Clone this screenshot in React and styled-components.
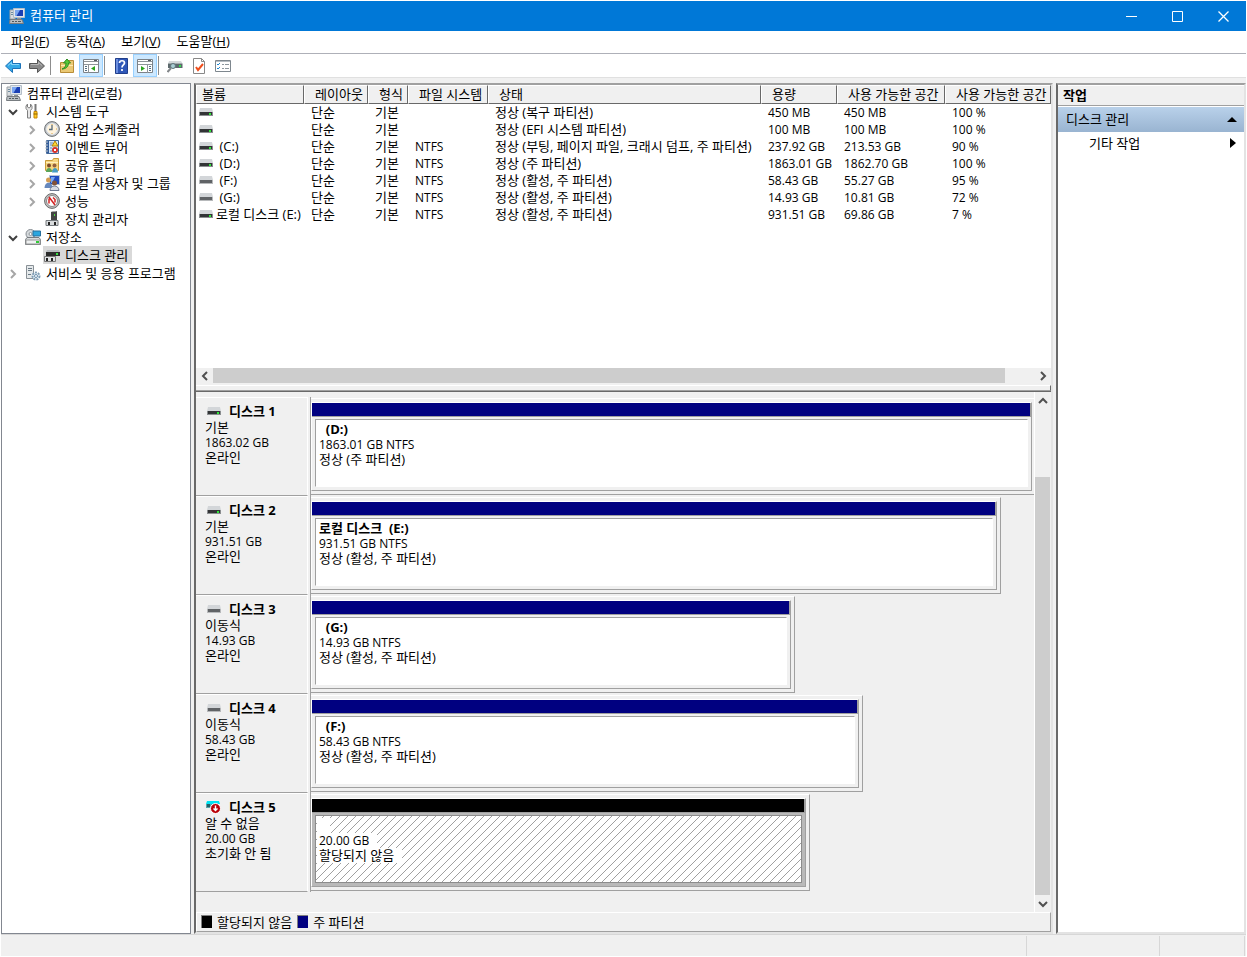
import styled, { createGlobalStyle } from "styled-components";

const GlobalStyle = createGlobalStyle`
  * {
    box-sizing: border-box;
  }
  body {
    margin: 0;
    background-color: white;
  }
  body,
  button {
    font-family: "Open Sans", "Noto Sans CJK KR", sans-serif;
    font-size: 13px;
    line-height: 18px;
    color: black;
  }
  button {
    border: 0;
    padding: 0;
    background: none;
  }
`;

const Window = styled.div`
  display: flex;
  flex-direction: column;
  min-height: 100vh;
  padding: 1px;
  background-color: white;
`;

const TitleBar = styled.header`
  display: flex;
  align-items: center;
  height: 30px;
  padding-left: 8px;
  background-color: #0078d7;
  color: white;
`;

const TitleText = styled.h1`
  flex: 1;
  margin: 0;
  padding: 0 0 2px 5px;
  font-size: 13px;
  line-height: 18px;
  font-weight: 400;
`;

const WindowButton = styled.button`
  display: flex;
  align-items: center;
  justify-content: center;
  width: 46px;
  height: 30px;
`;

const MenuBar = styled.nav`
  display: flex;
  align-items: center;
  height: 23px;
  border-bottom: 1px solid #aeb0b8;
`;

const MenuItem = styled.button`
  padding: 0 6px 2px 10px;
`;

const Toolbar = styled.div`
  display: flex;
  height: 23px;
`;

const ToolButton = styled.button`
  display: flex;
  align-items: center;
  justify-content: center;
  width: 24px;
  height: 23px;
  border: 1px solid ${(props) => (props.$active ? "#99d1ff" : "transparent")};
  background-color: ${(props) => (props.$active ? "#cce8ff" : "transparent")};
`;

const ToolDash = styled.div`
  width: 1px;
  height: 19px;
  margin: 2px 4px 0 1px;
  background-color: #8d8d8d;
`;

const Body = styled.main`
  display: flex;
  flex: 1;
  gap: 3px;
  padding-top: 5px;
  border-top: 1px solid #e0e0e0;
  background-color: #f0f0f0;
`;

const TreePanel = styled.aside`
  width: 190px;
  border: 1px solid #828790;
  background-color: white;
`;

const TreeList = styled.ul`
  margin: 0;
  padding: 0;
  list-style: none;
`;

const TreeRow = styled.li`
  display: flex;
  align-items: center;
  height: 18px;
  padding-left: ${(props) => [3, 3, 22][props.$level]}px;
`;

const TreeToggle = styled.span`
  display: flex;
  justify-content: center;
  width: 16px;
  margin-right: 3px;
  padding-top: 2px;
`;

const TreeItem = styled.button`
  display: flex;
  align-items: center;
  gap: 5px;
  height: 18px;
  padding: 0 4px 0 1px;
  white-space: nowrap;
  background-color: ${(props) => (props.$selected ? "#d9d9d9" : "transparent")};
`;

const SunkenPanel = styled.section`
  display: flex;
  flex-direction: column;
  border: 2px solid;
  border-color: #a0a0a0 #e3e3e3 #e3e3e3 #696969;
`;

const CenterPanel = styled(SunkenPanel)`
  flex: 1;
  min-width: 0;
`;

const VolumePane = styled.div`
  display: flex;
  flex-direction: column;
  height: 307px;
  border-bottom: 1px solid #696969;
`;

const VolumeList = styled.div`
  flex: 1;
  overflow: hidden;
  background-color: white;
`;

const VolumeTable = styled.table`
  width: 100%;
  table-layout: fixed;
  border-collapse: separate;
  border-spacing: 0;
`;

const HeadCell = styled.th`
  width: ${(props) => (props.$width ? `${props.$width}px` : "auto")};
  height: 19px;
  padding: 0 0 1px ${(props) => (props.$first ? 5 : 10)}px;
  border: 1px solid;
  border-color: white #696969 #696969 white;
  background-color: #f0f0f0;
  font-weight: 400;
  line-height: 16px;
  text-align: left;
  white-space: nowrap;
  overflow: hidden;
`;

const Cell = styled.td`
  height: 17px;
  padding: 0 0 0 ${(props) => (props.$first ? 3 : 7)}px;
  font-size: ${(props) => (props.$latin ? 12 : 13)}px;
  line-height: 17px;
  white-space: pre;
`;

const VolumeName = styled.div`
  display: flex;
  align-items: center;
  gap: 3px;
`;

const HorizontalBar = styled.div`
  display: flex;
  height: 16px;
`;

const HorizontalTrack = styled.div`
  flex: 1;
`;

const HorizontalThumb = styled.div`
  width: 96.5%;
  height: 15px;
  background-color: #cdcdcd;
`;

const ScrollButton = styled.button`
  display: flex;
  align-items: center;
  justify-content: center;
  width: ${(props) => (props.$vertical ? 15 : 17)}px;
  height: ${(props) => (props.$vertical ? 17 : 15)}px;
`;

const Splitter = styled.div`
  height: 6px;
  margin-top: 1px;
  border-top: 1px solid white;
  border-right: 1px solid #696969;
  border-bottom: 1px solid #a0a0a0;
`;

const DiskPane = styled.div`
  display: flex;
  flex: 1;
`;

const DiskList = styled.div`
  flex: 1;
  min-width: 0;
  padding-top: 5px;
  border-right: 1px solid white;
`;

const DiskRow = styled.div`
  display: flex;
  height: 99px;
`;

const DiskInfo = styled.div`
  width: 112px;
  padding: 5px 0 0 9px;
  border: 1px solid;
  border-color: white white #a0a0a0 #f0f0f0;
  border-left: 0;
  line-height: 15px;
`;

const DiskTitle = styled.h2`
  display: flex;
  align-items: center;
  gap: 8px;
  margin: 0 0 1px;
  font-size: 13px;
  line-height: 16px;
  font-weight: 700;
`;

const IconSlot = styled.span`
  display: flex;
  justify-content: flex-end;
  width: 16px;
`;

const Line = styled.div`
  height: 15px;
  font-size: ${(props) => (props.$latin ? 12 : 13)}px;
  font-weight: ${(props) => (props.$bold ? 700 : 400)};
  line-height: 15px;
  white-space: pre;
`;

const PartitionArea = styled.div`
  flex: 1;
  min-width: 0;
  margin-left: 2px;
  padding: 1px 0;
  border-left: 1px solid #a0a0a0;
`;

const PartitionFrame = styled.div`
  width: ${(props) => props.$share}%;
  height: 97px;
  padding: 3px ${(props) => (props.$share === 100 ? 2 : 3)}px 3px 0;
  border: 1px solid;
  border-color: white #a0a0a0 #a0a0a0;
  border-left: 0;
  border-right-width: ${(props) => (props.$share === 100 ? 0 : 1)}px;
`;

const Partition = styled.div`
  display: flex;
  flex-direction: column;
  height: 89px;
  border: 1px solid;
  border-color: white #a0a0a0 #a0a0a0 white;
  background-color: ${(props) => (props.$free ? "#b9b9b9" : "#f0f0f0")};
`;

const PartitionBar = styled.div`
  height: 14px;
  border-right: 1px solid #a0a0a0;
  border-bottom: 1px solid #a0a0a0;
  background-color: ${(props) => (props.$free ? "black" : "#000080")};
`;

const PartitionBox = styled.div`
  flex: 1;
  margin: 2px 3px 3px;
  padding: 2px 0 0 3px;
  border: 1px solid;
  border-color: #a0a0a0 white white #a0a0a0;
  background-color: white;
`;

const FreeBox = styled(PartitionBox)`
  padding: 2px 0 0 1px;
  border-color: #8c8c8c;
  background-image: linear-gradient(
    to bottom right,
    transparent 45%,
    #a0a0a0 45%,
    #a0a0a0 55%,
    transparent 55%
  );
  background-size: 8px 8px;
`;

const FreeLine = styled(Line)`
  width: fit-content;
  padding: 0 8px 0 2px;
  background-color: white;
`;

const VerticalBar = styled.div`
  display: flex;
  flex-direction: column;
  width: 16px;
`;

const VerticalTrack = styled.div`
  display: flex;
  flex: 1;
  align-items: flex-end;
`;

const VerticalThumb = styled.div`
  width: 15px;
  height: 86%;
  background-color: #cdcdcd;
`;

const Legend = styled.div`
  display: flex;
  align-items: center;
  gap: 5px;
  height: 20px;
  padding: 0 0 1px 4px;
  border: 1px solid;
  border-color: white #a0a0a0 #a0a0a0 white;
`;

const LegendColor = styled.span`
  width: 11px;
  height: 13px;
  border: 1px solid #808080;
  border-right: 0;
  border-bottom: 0;
  background-color: ${(props) => props.$color};
`;

const ActionPanel = styled(SunkenPanel)`
  width: 190px;
  background-color: white;
`;

const ActionHead = styled.h2`
  height: 21px;
  margin: 0 0 1px;
  padding: 1px 0 0 5px;
  border-top: 1px solid white;
  border-bottom: 1px solid #a0a0a0;
  background-color: #f0f0f0;
  font-size: 13px;
  line-height: 16px;
  font-weight: 700;
`;

const ActionGroup = styled.button`
  display: flex;
  align-items: center;
  justify-content: space-between;
  height: 25px;
  padding: 0 7px 1px 8px;
  background-image: linear-gradient(#b9d1ea, #99b4d1);
`;

const ActionItem = styled.button`
  display: flex;
  align-items: center;
  justify-content: space-between;
  height: 22px;
  padding: 0 8px 0 31px;
`;

const StatusBar = styled.footer`
  display: flex;
  justify-content: flex-end;
  height: 22px;
  padding-top: 1px;
  border-top: 1px solid #d7d7d7;
  background-color: #f0f0f0;
`;

const StatusPart = styled.div`
  width: ${(props) => props.$width}px;
  border-left: 1px solid #d7d7d7;
`;

const Svg = ({ children, w = 16, h = 16 }) => (
  <svg width={w} height={h} viewBox={`0 0 ${w} ${h}`} fill="none" aria-hidden="true">
    {children}
  </svg>
);

const ComputerIcon = () => (
  <Svg>
    <path d="M1 2h5v9H1z" fill="#d9dcdf" stroke="#9aa0a5" />
    <path d="M2 4.500h3M2 6.500h3" stroke="#6d8b9e" />
    <path d="M4.500 .5h11v9h-11z" fill="#dfe6ec" stroke="#b4bec8" />
    <path d="M6 2h8v6H6z" fill="#1a3fb4" />
    <path d="M6 2h5L7.500 8H6z" fill="#7ba6f0" />
    <path d="M8 10h4v1H8z" fill="#8b9299" />
    <path d="M1 11.500h12l1.500 4H.5z" fill="#b9bec2" stroke="#777c80" />
    <path d="M3 13.500h2m1 0h2m1 0h3" stroke="#4f5a61" />
  </Svg>
);

const ToolsIcon = () => (
  <Svg>
    <path d="M2.500 1v3l1.500 1 1.500-1V1l1.500 2v2.500L5.500 7.500V15h-3V7.500L1 5.500V3z" fill="#e8e8e8" stroke="#7e7e7e" />
    <path d="M10.500 1v7" stroke="#777" strokeWidth="2" />
    <path d="M9 8.500h3v6.500H9z" fill="#ffc91d" stroke="#c48609" />
    <path d="M8.500 11h4" stroke="#8d6300" />
  </Svg>
);

const ClockIcon = () => (
  <Svg>
    <circle cx="8" cy="8" r="7.400" fill="#c4c7ca" stroke="#6d7174" />
    <circle cx="8" cy="8" r="5.300" fill="#fff3dc" stroke="#e9edf0" />
    <path d="M8 4v4.500H5" stroke="#576a7a" strokeWidth="1.300" />
    <path d="M8 3v1m5 4h-1m-4 5v-1" stroke="#dda23e" />
  </Svg>
);

const EventIcon = () => (
  <Svg>
    <path d="M2.500 1.500h12v13h-12z" fill="#d5e6f8" stroke="#466b9b" />
    <path d="M3 2h2v12H3z" fill="#315b9a" />
    <path d="M1 3h3M1 6h3M1 9h3M1 12h3" stroke="#bfc6cc" />
    <path d="M6 4h3m-3 2h2m-2 3h2m-2 3h2" stroke="#6888b1" />
    <path d="M11 2l3 5H8z" fill="#ffd633" stroke="#b28408" />
    <circle cx="11" cy="11" r="3" fill="#d9322a" />
    <path d="M10 10l2 2m0-2l-2 2" stroke="white" />
  </Svg>
);

const SharedFolderIcon = () => (
  <Svg>
    <path d="M1.500 3.500h7l1-2h5v12h-13z" fill="#f7d681" stroke="#c89b3a" />
    <path d="M2 5.500h12" stroke="#fff0bd" />
    <circle cx="5" cy="8.500" r="2" fill="#7b4b2d" />
    <path d="M2 15c0-5.500 6-5.500 6 0z" fill="#5aa55a" />
    <circle cx="10.500" cy="8.500" r="2" fill="#95603d" />
    <path d="M8 15.500c0-6 6-6 6 0z" fill="#469cc4" />
  </Svg>
);

const UsersIcon = () => (
  <Svg>
    <path d="M5.500 .5h10v9h-10z" fill="#1f4cc0" stroke="#b8c5d3" />
    <path d="M7 2h4L8 8H7z" fill="#75a7f4" />
    <circle cx="4.500" cy="5" r="2.500" fill="#d49b52" />
    <path d="M.5 13c0-7 8-7 8 0z" fill="#6688bd" />
    <circle cx="10.500" cy="8" r="2.500" fill="#835236" />
    <path d="M6 15.500c0-6 9-6 9 0z" fill="#d6dae3" stroke="#6e7890" />
  </Svg>
);

const PerformanceIcon = () => (
  <Svg>
    <circle cx="8" cy="8" r="7.400" fill="#c3c3c3" stroke="#696969" />
    <circle cx="8" cy="8" r="5.500" fill="white" stroke="#888" />
    <path d="M5 10.500V5.500m0-1.500l6 8M9 4.500l2 2v3" stroke="#d32222" strokeWidth="1.500" />
  </Svg>
);

const DeviceIcon = () => (
  <Svg>
    <path d="M7 1l6-1v9H7z" fill="#444" />
    <path d="M7 1l2-1h4l-2 1z" fill="#a7a7a7" />
    <path d="M10 3h1v2h-1z" fill="#4cdc3c" />
    <path d="M2 9.500h12v5H2z" fill="#d9dcde" stroke="#74797d" />
    <path d="M4 11h2v3H4zm6 0h2v3h-2z" fill="#222" />
  </Svg>
);

const StorageIcon = () => (
  <Svg>
    <circle cx="5.500" cy="5" r="4.500" fill="#d5d9dc" stroke="#868c92" />
    <circle cx="5.500" cy="5" r="1.500" fill="white" stroke="#8d9499" />
    <path d="M8 2h7.500v5H8z" fill="#2ba6df" stroke="#286f9c" />
    <path d="M2 8.500h12l1.500 2v5H.5v-5z" fill="#d8dbdd" stroke="#777c80" />
    <path d="M1 11h14v4H1z" fill="#eff1f2" stroke="#999" />
    <path d="M11 12h3v2h-3z" fill="#31cc36" />
  </Svg>
);

const DiskManagementIcon = () => (
  <Svg>
    <path d="M3 3h12l1 2v1H2V5z" fill="#b8bcbf" />
    <path d="M2 5h14v4H2z" fill="#2c2c2c" />
    <path d="M12 6h2v2h-2z" fill="#36df43" />
    <path d="M.5 9.500h11v5H.5z" fill="#e0e2e4" stroke="#777" />
    <path d="M2 11h2v3H2zm5 0h2v3H7z" fill="#222" />
  </Svg>
);

const ServicesIcon = () => (
  <Svg>
    <path d="M1.500 .5h7v13h-7z" fill="#e5e9eb" stroke="#899096" />
    <path d="M3 3.500h4M3 5.500h4M3 9.500h3" stroke="#697984" />
    <circle cx="11" cy="11" r="3.500" fill="#e9f2f8" stroke="#7f9db4" strokeWidth="2" strokeDasharray="2 1" />
    <circle cx="11" cy="11" r="1.500" fill="white" stroke="#6e91ae" />
  </Svg>
);

const DriveIcon = ({ removable }) => (
  <Svg w={14} h={9}>
    <path d="M1 0h12l1 4H0z" fill="#d3d6d9" />
    <path d="M0 4h14v4H0z" fill={removable ? "#b7b9bb" : "#8b8e90"} />
    <path d="M1 4h12v3H1z" fill={removable ? "#606366" : "#323436"} />
    {!removable && <path d="M10 5h2v2h-2z" fill="#2ee738" />}
  </Svg>
);

const UnknownDriveIcon = () => (
  <Svg w={15} h={13}>
    <path d="M1 0h12l1 3H0z" fill="#00e4f3" />
    <path d="M0 3h7v4H0z" fill="#59a3aa" />
    <path d="M1 3h3v3H1z" fill="#285e65" />
    <circle cx="9.500" cy="7.500" r="5" fill="#b90008" stroke="white" />
    <path d="M9.500 4.500v5m-2-2l2 2 2-2" stroke="white" strokeWidth="1.400" />
  </Svg>
);

const ArrowIcon = ({ back }) => (
  <Svg>
    <path
      d={back ? "M.5 8l7-6.500v4h8v5h-8v4z" : "M15.500 8l-7-6.500v4h-8v5h8v4z"}
      fill={back ? "#35a9e6" : "#8a8a8a"}
      stroke={back ? "#1c72b8" : "#555"}
    />
    <path d={back ? "M3 7.500l3.500-3v2H14" : "M2 6.500h7.500v-2l3.500 3"} stroke={back ? "#8bd7fa" : "#b9b9b9"} />
  </Svg>
);

const FolderUpIcon = () => (
  <Svg>
    <path d="M1.500 4.500h7l1-2h5v12h-13z" fill="#eac873" stroke="#b98d36" />
    <path d="M2 7.500h12" stroke="#ffeab0" />
    <path d="M3 11c3-1 4-3 4-6H4.500L8 1l3.500 4H9.500c0 4-3 6-6.500 6z" fill="#58c837" stroke="#2d8c21" />
  </Svg>
);

const PaneIcon = ({ right }) => (
  <Svg>
    <path d="M.5 1.500h15v13H.5z" fill="white" stroke="#7c8288" />
    <path d="M1 3.500h14M1 6.500h14" stroke="#8e9499" />
    <path d="M11 2.500h3" stroke="#565b60" />
    <path d={right ? "M10.500 7v8" : "M5.500 7v8"} stroke="#8e9499" />
    <path d={right ? "M12 8.500h2m-2 2h2m-2 2h2" : "M2 8.500h2m-2 2h2m-2 2h2"} stroke="#536d81" />
    <path d={right ? "M4 8v5l4-2.500z" : "M12 8v5l-4-2.500z"} fill="#2ba51f" />
  </Svg>
);

const HelpIcon = () => (
  <Svg>
    <path d="M2.500.5h12v15h-12z" fill="#2f57b8" stroke="#203e8b" />
    <path d="M3 1h2v14H3z" fill="#6c8fdf" />
    <path d="M6.500 5c0-3 5-3 5 0 0 2-2.500 2-2.500 4.500M9 11v2" stroke="white" strokeWidth="1.700" />
  </Svg>
);

const ConnectIcon = () => (
  <Svg>
    <path d="M2 3h12l1.500 2.500H1z" fill="#d4d8da" />
    <path d="M1 5.500h14.500V10H1z" fill="#5c696c" />
    <path d="M12 7h2v2h-2z" fill="#32dd4a" />
    <circle cx="6" cy="8" r="2.500" fill="#a9cdd3" stroke="#60747a" />
    <path d="M4 10l-3.500 4" stroke="#83878a" strokeWidth="2" />
  </Svg>
);

const CheckPageIcon = () => (
  <Svg>
    <path d="M2.500.5h8l3 3v12h-11z" fill="white" stroke="#888" />
    <path d="M10.500.5v3h3" stroke="#888" />
    <path d="M5 9l2 3 5-6" stroke="#ef4e1c" strokeWidth="2" />
  </Svg>
);

const CheckListIcon = () => (
  <Svg>
    <path d="M.5 2.500h15v11H.5z" fill="white" stroke="#7e878e" />
    <path d="M1 3.500h14" stroke="#b6bdc3" />
    <path d="M2 6l1 1 2-2m-3 5l1 1 2-2" stroke="#1f86d1" />
    <path d="M7 6.500h2m1 0h4m-7 4h2m1 0h4" stroke="#8d979e" />
  </Svg>
);

const chevrons = {
  down: "M1 3l4 4 4-4",
  up: "M1 7l4-4 4 4",
  left: "M7 1L3 5l4 4",
  right: "M3 1l4 4-4 4",
};

const Chevron = ({ to, color = "#505050" }) => (
  <Svg w={10} h={10}>
    <path d={chevrons[to]} stroke={color} strokeWidth="2" />
  </Svg>
);

const menus = [
  ["파일", "F"],
  ["동작", "A"],
  ["보기", "V"],
  ["도움말", "H"],
];

const tree = [
  { level: 0, label: "컴퓨터 관리(로컬)", icon: ComputerIcon },
  { level: 1, label: "시스템 도구", icon: ToolsIcon, open: true },
  { level: 2, label: "작업 스케줄러", icon: ClockIcon, open: false },
  { level: 2, label: "이벤트 뷰어", icon: EventIcon, open: false },
  { level: 2, label: "공유 폴더", icon: SharedFolderIcon, open: false },
  { level: 2, label: "로컬 사용자 및 그룹", icon: UsersIcon, open: false },
  { level: 2, label: "성능", icon: PerformanceIcon, open: false },
  { level: 2, label: "장치 관리자", icon: DeviceIcon },
  { level: 1, label: "저장소", icon: StorageIcon, open: true },
  { level: 2, label: "디스크 관리", icon: DiskManagementIcon, selected: true },
  { level: 1, label: "서비스 및 응용 프로그램", icon: ServicesIcon, open: false },
];

const columns = [
  ["볼륨", 108],
  ["레이아웃", 64],
  ["형식", 40],
  ["파일 시스템", 80],
  ["상태", 273],
  ["용량", 76],
  ["사용 가능한 공간", 108],
  ["사용 가능한 공간", null],
];

const volumes = [
  ["", "", "정상 (복구 파티션)", "450 MB", "450 MB", "100 %"],
  ["", "", "정상 (EFI 시스템 파티션)", "100 MB", "100 MB", "100 %"],
  [" (C:)", "NTFS", "정상 (부팅, 페이지 파일, 크래시 덤프, 주 파티션)", "237.92 GB", "213.53 GB", "90 %"],
  [" (D:)", "NTFS", "정상 (주 파티션)", "1863.01 GB", "1862.70 GB", "100 %"],
  [" (F:)", "NTFS", "정상 (활성, 주 파티션)", "58.43 GB", "55.27 GB", "95 %"],
  [" (G:)", "NTFS", "정상 (활성, 주 파티션)", "14.93 GB", "10.81 GB", "72 %"],
  ["로컬 디스크 (E:)", "NTFS", "정상 (활성, 주 파티션)", "931.51 GB", "69.86 GB", "7 %"],
];

const disks = [
  { name: "디스크 1", type: "기본", size: "1863.02 GB", state: "온라인", share: 100, part: ["  (D:)", "1863.01 GB NTFS", "정상 (주 파티션)"] },
  { name: "디스크 2", type: "기본", size: "931.51 GB", state: "온라인", share: 95.5, part: ["로컬 디스크  (E:)", "931.51 GB NTFS", "정상 (활성, 주 파티션)"] },
  { name: "디스크 3", type: "이동식", size: "14.93 GB", state: "온라인", share: 67, part: ["  (G:)", "14.93 GB NTFS", "정상 (활성, 주 파티션)"], removable: true },
  { name: "디스크 4", type: "이동식", size: "58.43 GB", state: "온라인", share: 76.4, part: ["  (F:)", "58.43 GB NTFS", "정상 (활성, 주 파티션)"], removable: true },
  { name: "디스크 5", type: "알 수 없음", size: "20.00 GB", state: "초기화 안 됨", share: 69, part: [" ", "20.00 GB", "할당되지 않음"], free: true },
];

const Disk = ({ disk }) => {
  const Box = disk.free ? FreeBox : PartitionBox;
  const Text = disk.free ? FreeLine : Line;

  return (
    <DiskRow>
      <DiskInfo>
        <DiskTitle>
          <IconSlot>
            {disk.free ? <UnknownDriveIcon /> : <DriveIcon removable={disk.removable} />}
          </IconSlot>
          {disk.name}
        </DiskTitle>
        <Line>{disk.type}</Line>
        <Line $latin>{disk.size}</Line>
        <Line>{disk.state}</Line>
      </DiskInfo>
      <PartitionArea>
        <PartitionFrame $share={disk.share}>
          <Partition $free={disk.free}>
            <PartitionBar $free={disk.free} />
            <Box>
              <Text $bold>{disk.part[0]}</Text>
              <Text $latin>{disk.part[1]}</Text>
              <Text>{disk.part[2]}</Text>
            </Box>
          </Partition>
        </PartitionFrame>
      </PartitionArea>
    </DiskRow>
  );
};

const App = () => {
  return (
    <Window>
      <GlobalStyle />
      <TitleBar>
        <ComputerIcon />
        <TitleText>컴퓨터 관리</TitleText>
        <WindowButton aria-label="최소화">
          <Svg w={11} h={11}><path d="M0 5.500h11" stroke="white" /></Svg>
        </WindowButton>
        <WindowButton aria-label="최대화">
          <Svg w={11} h={11}><path d="M.5.5h10v10H.5z" stroke="white" /></Svg>
        </WindowButton>
        <WindowButton aria-label="닫기">
          <Svg w={11} h={11}><path d="M.5.5l10 10m0-10l-10 10" stroke="white" strokeWidth="1.300" /></Svg>
        </WindowButton>
      </TitleBar>

      <MenuBar>
        {menus.map(([label, key]) => (
          <MenuItem key={key}>
            {label}(<u>{key}</u>)
          </MenuItem>
        ))}
      </MenuBar>

      <Toolbar>
        <ToolButton aria-label="뒤로"><ArrowIcon back /></ToolButton>
        <ToolButton aria-label="앞으로"><ArrowIcon /></ToolButton>
        <ToolDash />
        <ToolButton aria-label="한 수준 위로"><FolderUpIcon /></ToolButton>
        <ToolButton $active aria-label="콘솔 트리"><PaneIcon /></ToolButton>
        <ToolDash />
        <ToolButton aria-label="도움말"><HelpIcon /></ToolButton>
        <ToolButton $active aria-label="작업 창"><PaneIcon right /></ToolButton>
        <ToolDash />
        <ToolButton aria-label="디스크 다시 검색"><ConnectIcon /></ToolButton>
        <ToolButton aria-label="속성"><CheckPageIcon /></ToolButton>
        <ToolButton aria-label="설정"><CheckListIcon /></ToolButton>
      </Toolbar>

      <Body>
        <TreePanel>
          <TreeList>
            {tree.map(({ level, label, icon: Icon, open, selected }) => (
              <TreeRow key={label} $level={level}>
                {level > 0 && (
                  <TreeToggle>
                    {open === true && <Chevron to="down" color="#404040" />}
                    {open === false && <Chevron to="right" color="#a6a6a6" />}
                  </TreeToggle>
                )}
                <TreeItem $selected={selected}>
                  <Icon />
                  {label}
                </TreeItem>
              </TreeRow>
            ))}
          </TreeList>
        </TreePanel>

        <CenterPanel>
          <VolumePane>
            <VolumeList>
              <VolumeTable>
                <thead>
                  <tr>
                    {columns.map(([label, width], index) => (
                      <HeadCell key={index} $width={width} $first={index === 0}>{label}</HeadCell>
                    ))}
                  </tr>
                </thead>
                <tbody>
                  {volumes.map(([name, fs, status, size, free, percent], index) => (
                    <tr key={index}>
                      <Cell $first>
                        <VolumeName>
                          <DriveIcon removable={index === 4 || index === 5} />
                          {name}
                        </VolumeName>
                      </Cell>
                      <Cell>단순</Cell>
                      <Cell>기본</Cell>
                      <Cell $latin>{fs}</Cell>
                      <Cell>{status}</Cell>
                      <Cell $latin>{size}</Cell>
                      <Cell $latin>{free}</Cell>
                      <Cell $latin>{percent}</Cell>
                    </tr>
                  ))}
                </tbody>
              </VolumeTable>
            </VolumeList>
            <HorizontalBar>
              <ScrollButton aria-label="왼쪽"><Chevron to="left" /></ScrollButton>
              <HorizontalTrack><HorizontalThumb /></HorizontalTrack>
              <ScrollButton aria-label="오른쪽"><Chevron to="right" /></ScrollButton>
            </HorizontalBar>
            <Splitter />
          </VolumePane>

          <DiskPane>
            <DiskList>
              {disks.map((disk) => (
                <Disk key={disk.name} disk={disk} />
              ))}
            </DiskList>
            <VerticalBar>
              <ScrollButton $vertical aria-label="위로"><Chevron to="up" /></ScrollButton>
              <VerticalTrack><VerticalThumb /></VerticalTrack>
              <ScrollButton $vertical aria-label="아래로"><Chevron to="down" /></ScrollButton>
            </VerticalBar>
          </DiskPane>

          <Legend>
            <LegendColor $color="black" />
            할당되지 않음
            <LegendColor $color="#000080" />
            주 파티션
          </Legend>
        </CenterPanel>

        <ActionPanel>
          <ActionHead>작업</ActionHead>
          <ActionGroup>
            디스크 관리
            <Svg w={10} h={5}><path d="M5 0l5 5H0z" fill="black" /></Svg>
          </ActionGroup>
          <ActionItem>
            기타 작업
            <Svg w={6} h={10}><path d="M0 0l6 5-6 5z" fill="black" /></Svg>
          </ActionItem>
        </ActionPanel>
      </Body>

      <StatusBar>
        <StatusPart $width={133} />
        <StatusPart $width={85} />
        <StatusPart $width={2} />
      </StatusBar>
    </Window>
  );
};

export default App;
